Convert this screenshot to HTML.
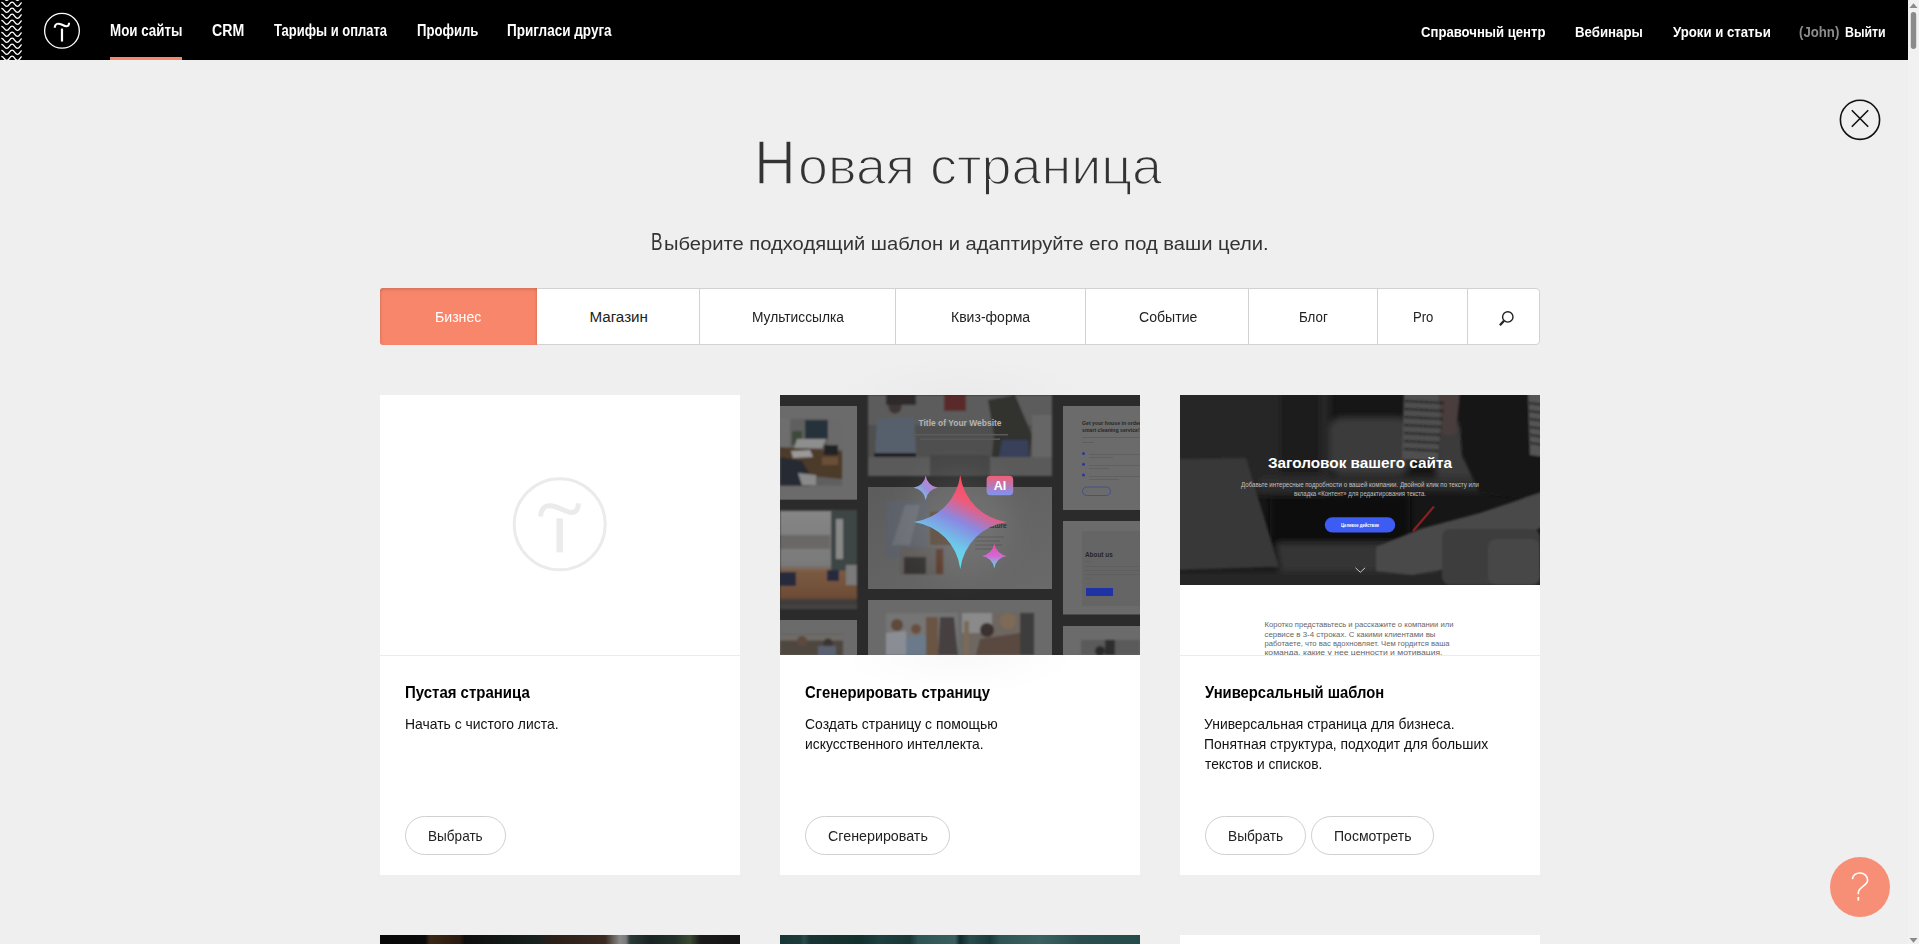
<!DOCTYPE html>
<html><head><meta charset="utf-8">
<style>
*{box-sizing:border-box;margin:0;padding:0}
html,body{width:1919px;height:944px;overflow:hidden}
body{background:#efefef;position:relative;font-family:"Liberation Sans",sans-serif;color:#000}
.abs{position:absolute}
.t{position:absolute;white-space:nowrap;line-height:1;transform-origin:0 0}
.thin3{-webkit-text-stroke:1.6px #efefef}
.thin1{-webkit-text-stroke:0.5px #efefef}
#hdr{position:absolute;left:0;top:0;width:1908px;height:60px;background:#000}
#uline{position:absolute;left:110px;top:57px;width:72px;height:3px;background:#f8876b}
#sb{position:absolute;left:1908px;top:0;width:11px;height:944px;background:#f1f1f1}
#tabs{position:absolute;left:380px;top:288px;width:1160px;height:57px;background:#fff;border:1px solid #d2d2d2;border-radius:4px}
.sep{position:absolute;top:288px;width:1px;height:57px;background:#d2d2d2}
.card{position:absolute;top:395px;width:360px;height:480px;background:#fff}
.card .img{position:absolute;left:0;top:0;width:360px;height:260px;overflow:hidden}
.card .line{position:absolute;left:0;top:260px;width:360px;height:1px;background:#ececec}
.btn{position:absolute;top:816px;height:39px;border:1px solid #d0d0d0;border-radius:20px;background:#fff}
.pn{position:absolute;background:#6b6b6b}
</style></head><body>
<div id="hdr">
<svg class="abs" style="left:0;top:0" width="24" height="60" viewBox="0 0 24 60">
<path d="M1.3,-3.6 C3.8,-3.8 4.3,0.4 6.7,0.4 C9.2,0.4 9.6,-3.8 12.1,-3.8 C14.6,-3.8 15,0.4 17.5,0.4 C19.5,0.4 20.2,-2.4 21.6,-3.6 M1.3,2.4 C3.8,2.2 4.3,6.4 6.7,6.4 C9.2,6.4 9.6,2.2 12.1,2.2 C14.6,2.2 15,6.4 17.5,6.4 C19.5,6.4 20.2,3.6 21.6,2.4 M1.3,8.4 C3.8,8.2 4.3,12.4 6.7,12.4 C9.2,12.4 9.6,8.2 12.1,8.2 C14.6,8.2 15,12.4 17.5,12.4 C19.5,12.4 20.2,9.6 21.6,8.4 M1.3,14.4 C3.8,14.2 4.3,18.4 6.7,18.4 C9.2,18.4 9.6,14.2 12.1,14.2 C14.6,14.2 15,18.4 17.5,18.4 C19.5,18.4 20.2,15.6 21.6,14.4 M1.3,20.4 C3.8,20.2 4.3,24.4 6.7,24.4 C9.2,24.4 9.6,20.2 12.1,20.2 C14.6,20.2 15,24.4 17.5,24.4 C19.5,24.4 20.2,21.6 21.6,20.4 M1.3,26.4 C3.8,26.2 4.3,30.4 6.7,30.4 C9.2,30.4 9.6,26.2 12.1,26.2 C14.6,26.2 15,30.4 17.5,30.4 C19.5,30.4 20.2,27.6 21.6,26.4 M1.3,32.4 C3.8,32.2 4.3,36.4 6.7,36.4 C9.2,36.4 9.6,32.2 12.1,32.2 C14.6,32.2 15,36.4 17.5,36.4 C19.5,36.4 20.2,33.6 21.6,32.4 M1.3,38.4 C3.8,38.2 4.3,42.4 6.7,42.4 C9.2,42.4 9.6,38.2 12.1,38.2 C14.6,38.2 15,42.4 17.5,42.4 C19.5,42.4 20.2,39.6 21.6,38.4 M1.3,44.4 C3.8,44.2 4.3,48.4 6.7,48.4 C9.2,48.4 9.6,44.2 12.1,44.2 C14.6,44.2 15,48.4 17.5,48.4 C19.5,48.4 20.2,45.6 21.6,44.4 M1.3,50.4 C3.8,50.2 4.3,54.4 6.7,54.4 C9.2,54.4 9.6,50.2 12.1,50.2 C14.6,50.2 15,54.4 17.5,54.4 C19.5,54.4 20.2,51.6 21.6,50.4 M1.3,56.4 C3.8,56.2 4.3,60.4 6.7,60.4 C9.2,60.4 9.6,56.2 12.1,56.2 C14.6,56.2 15,60.4 17.5,60.4 C19.5,60.4 20.2,57.6 21.6,56.4" fill="none" stroke="#fff" stroke-width="1.3"/>
</svg>
<svg class="abs" style="left:43.4px;top:11.7px" width="38.2" height="38.2" viewBox="0 0 100 100">
<circle cx="49.7" cy="49.3" r="45.5" fill="none" stroke="#fff" stroke-width="3.4"/>
<path d="M30.7,41.5 C31,29.5 40,28.5 50,33.5 C60,38.5 68,40.5 68.4,28.3" fill="none" stroke="#fff" stroke-width="5.4"/>
<path d="M49.7,43.4 L49.7,77.4" stroke="#fff" stroke-width="5.8"/>
</svg>
<div id="uline"></div>
</div>
<div id="sb">
<svg class="abs" style="left:0;top:0" width="11" height="944">
<path d="M1.5,8 L5.5,3.2 L9.5,8 Z" fill="#8a8a8a"/>
<rect x="2.8" y="12" width="5.4" height="37" rx="2.7" fill="#8a8a8a"/>
<path d="M1.5,938 L5.5,942.8 L9.5,938 Z" fill="#8a8a8a"/>
</svg>
</div>
<svg class="abs" style="left:1838px;top:98px" width="44" height="44" viewBox="0 0 44 44">
<circle cx="22" cy="21.8" r="19.6" fill="none" stroke="#111" stroke-width="1.6"/>
<path d="M13.8,12.3 L30.2,28.8 M30.2,12.3 L13.8,28.8" stroke="#111" stroke-width="1.6"/>
</svg>

<div id="tabs"></div>
<div class="abs" style="left:380px;top:288px;width:157px;height:57px;background:#f8866a;border-radius:3px 0 0 3px;box-shadow:inset 0 3px 3px -1px rgba(0,0,0,.12),inset 3px 0 3px -2px rgba(0,0,0,.10),inset -3px 0 3px -2px rgba(0,0,0,.10)"></div>
<div class="sep" style="left:699px"></div>
<div class="sep" style="left:895px"></div>
<div class="sep" style="left:1085px"></div>
<div class="sep" style="left:1248px"></div>
<div class="sep" style="left:1377px"></div>
<div class="sep" style="left:1467px"></div>
<svg class="abs" style="left:1496px;top:306px" width="20" height="20" viewBox="0 0 20 20">
<circle cx="11.8" cy="10.9" r="5.2" fill="none" stroke="#222" stroke-width="1.4"/>
<path d="M8,14.7 L3.9,19.2" stroke="#222" stroke-width="2.3"/>
</svg>

<div class="card" style="left:380px">
<div class="img">
<svg class="abs" style="left:130px;top:80px" width="100" height="100" viewBox="0 0 100 100">
<circle cx="49.7" cy="49.3" r="45.5" fill="none" stroke="#ebebeb" stroke-width="3"/>
<path d="M30.7,41.5 C31,29.5 40,28.5 50,33.5 C60,38.5 68,40.5 68.4,28.3" fill="none" stroke="#ebebeb" stroke-width="5"/>
<path d="M49.7,43.4 L49.7,77.4" stroke="#ebebeb" stroke-width="6.4"/>
</svg>
</div>
<div class="line"></div>
</div>

<div class="abs" style="left:830px;top:355px;width:260px;height:40px;background:radial-gradient(ellipse 50% 100% at 50% 100%,rgba(0,0,0,.02),rgba(0,0,0,0))"></div>
<div class="card" style="left:780px">
<div class="img" style="background:#2b2b2b">
<svg class="abs" style="left:0;top:0" width="360" height="260" viewBox="0 0 360 260">
<defs>
<filter id="b2" x="-10%" y="-10%" width="120%" height="120%"><feGaussianBlur stdDeviation="1.2"/></filter>
<filter id="glow" x="-50%" y="-50%" width="200%" height="200%"><feGaussianBlur stdDeviation="16"/></filter>
<linearGradient id="gBig" x1="0.72" y1="0.04" x2="0.28" y2="0.96"><stop offset="0" stop-color="#ff4454"/><stop offset="0.28" stop-color="#f05a78"/><stop offset="0.5" stop-color="#8a88e2"/><stop offset="0.75" stop-color="#6ccaea"/><stop offset="1" stop-color="#58e8ea"/></linearGradient>
<linearGradient id="gTL" x1="0.1" y1="0.9" x2="0.9" y2="0.1"><stop offset="0" stop-color="#70d0ee"/><stop offset="0.5" stop-color="#9a90dc"/><stop offset="1" stop-color="#e07ac0"/></linearGradient>
<linearGradient id="gBR" x1="0.5" y1="0" x2="0.5" y2="1"><stop offset="0" stop-color="#f44aa8"/><stop offset="0.5" stop-color="#d268d4"/><stop offset="1" stop-color="#58e6ea"/></linearGradient>
<linearGradient id="gAI" x1="0.5" y1="0" x2="0.5" y2="1"><stop offset="0" stop-color="#f25e74"/><stop offset="1" stop-color="#7e94f2"/></linearGradient>
<linearGradient id="gRoom" x1="0" y1="0" x2="0" y2="1"><stop offset="0" stop-color="#868686"/><stop offset="0.55" stop-color="#7a7a7a"/><stop offset="0.62" stop-color="#7a5a42"/><stop offset="0.88" stop-color="#6e4c36"/><stop offset="0.92" stop-color="#3a3a3c"/><stop offset="1" stop-color="#4a4644"/></linearGradient>
<linearGradient id="gPan" x1="0" y1="0" x2="1" y2="1"><stop offset="0" stop-color="#5c5c5c"/><stop offset="1" stop-color="#6a6a6a"/></linearGradient>
</defs>
<rect width="360" height="260" fill="#2b2b2b"/>
<!-- left column -->
<rect x="0" y="11" width="77" height="93.7" fill="#6b6b6b"/>
<g filter="url(#b2)">
<rect x="0" y="24" width="62" height="66.6" fill="#5e5e5e"/>
<rect x="0" y="24" width="10" height="30" fill="#6e6e6e"/>
<rect x="48" y="24" width="14" height="30" fill="#6a6a6a"/>
<rect x="12" y="36" width="10" height="14" fill="#3e4a3a"/>
<polygon points="0,52 62,56 62,84 0,78" fill="#4e3a2a"/>
<rect x="25" y="25" width="23" height="19" fill="#26303a"/>
<polygon points="17,44 46,44 42,53 14,53" fill="#8e8e8e"/>
<polygon points="11,56 30,55 33,62 13,63" fill="#9a9a9a"/>
<rect x="42" y="62" width="16" height="8" fill="#6a5038"/>
<polygon points="0,62 22,66 34,86 30,90.6 0,90.6" fill="#262a32"/>
<polygon points="18,78 36,80 36,90 22,90" fill="#8a8a8a"/>
<rect x="44" y="50" width="14" height="10" fill="#222"/>
</g>
<g filter="url(#b2)">
<rect x="0" y="115.7" width="77" height="98.3" fill="url(#gRoom)"/>
<rect x="0" y="140" width="50" height="14" fill="#6a6866"/>
<rect x="51" y="115.7" width="26" height="60" fill="#3e4444"/>
<rect x="56" y="124" width="7" height="40" fill="#888"/>
<rect x="0" y="177" width="16" height="14" fill="#262c3c"/>
<rect x="47" y="175" width="12" height="11" fill="#262c3c"/>
<rect x="66" y="170" width="11" height="20" fill="#7a7a7a"/>
</g>
<rect x="0" y="225" width="77" height="35" fill="#6b6b6b"/>
<g filter="url(#b2)">
<rect x="0" y="239.5" width="63" height="21" fill="#4e4640"/>
<rect x="0" y="239.5" width="63" height="6" fill="#6e6a66"/>
<circle cx="22" cy="246" r="5" fill="#5e4a3c"/>
<circle cx="48" cy="248" r="4.5" fill="#3a3430"/>
<rect x="38" y="251" width="18" height="10" fill="#5a6070"/>
</g>
<!-- middle column top hero -->
<g filter="url(#b2)">
<rect x="88" y="0" width="184" height="81" fill="#505050"/>
<rect x="88" y="0" width="184" height="30" fill="#5c5c5c"/>
<circle cx="115" cy="12" r="6.5" fill="#3e3630"/>
<polygon points="97,24 134,22 136,60 95,62" fill="#56606c"/>
<rect x="94" y="58" width="42" height="12" fill="#1e1e1e"/>
<rect x="106" y="0" width="30" height="10" fill="#2e2a2a"/>
<rect x="164" y="0" width="22" height="16" fill="#5a2c2c"/>
<polygon points="208,5 235,0 252,40 248,81 210,81 214,40" fill="#33302e"/>
<polygon points="222,45 248,45 250,81 215,81" fill="#38405a"/>
<rect x="252" y="20" width="20" height="61" fill="#666"/>
<rect x="88" y="62" width="184" height="19" fill="#5a5a5a"/>
<rect x="150" y="60" width="60" height="21" fill="#444"/>
</g>
<text x="180" y="31" text-anchor="middle" font-family="Liberation Sans" font-weight="bold" font-size="9.5" fill="#b4b4b4" textLength="83" lengthAdjust="spacingAndGlyphs">Title of Your Website</text>
<rect x="132" y="39" width="96" height="1.4" fill="#5c5c5c"/>
<rect x="140" y="43.5" width="80" height="1.4" fill="#5a5a5a"/>
<!-- middle panel 2 -->
<rect x="88" y="92" width="184" height="102" fill="url(#gPan)"/>
<g filter="url(#b2)">
<rect x="106" y="106" width="41.5" height="56.5" fill="#5c6068"/>
<polygon points="125,110 140,110 130,150 112,150" fill="#6a6e74"/>
<rect x="150" y="117" width="21.5" height="33" fill="#5a4a3a"/>
<rect x="120" y="152.4" width="44" height="27.3" fill="#5e5c5a"/>
<rect x="124" y="162" width="22" height="17" fill="#343232"/>
<rect x="156" y="154" width="7" height="25" fill="#5a3a2c"/>
</g>
<text x="205" y="133.3" font-family="Liberation Sans" font-weight="bold" font-size="6.5" fill="#262626">feature</text>
<g fill="#505050"><rect x="195" y="141.5" width="29" height="1"/><rect x="195" y="145.5" width="25" height="1"/><rect x="195" y="149.5" width="27" height="1"/><rect x="195" y="153.5" width="21" height="1"/></g>
<!-- middle panel 3 -->
<rect x="88" y="205" width="184" height="55" fill="#6a6a6a"/>
<g filter="url(#b2)">
<rect x="106" y="218" width="72" height="42" fill="#747474"/>
<rect x="146" y="222" width="12" height="38" fill="#6a5444"/>
<circle cx="117" cy="230" r="6" fill="#5e4a3a"/>
<polygon points="106,238 126,236 128,260 106,260" fill="#8a8e94"/>
<circle cx="136" cy="234" r="5" fill="#6a5040"/>
<polygon points="126,242 146,240 146,260 126,260" fill="#6a7a8a"/>
<polygon points="160,222 174,222 178,260 158,260" fill="#464040"/>
<rect x="182" y="218" width="72" height="42" fill="#6e6660"/>
<rect x="182" y="218" width="30" height="20" fill="#8a8a8a"/>
<rect x="184" y="226" width="5" height="34" fill="#7a6a58"/>
<circle cx="207" cy="235" r="7" fill="#3a3030"/>
<circle cx="228" cy="226" r="8" fill="#7e6a56"/>
<polygon points="200,244 254,236 254,260 196,260" fill="#5a4a40"/>
<rect x="240" y="218" width="14" height="42" fill="#3e3c3c"/>
</g>
<!-- right column -->
<rect x="283" y="11" width="77" height="104" fill="#6b6b6b"/>
<g font-family="Liberation Sans" font-weight="bold" font-size="5.2" fill="#262626">
<text x="302" y="30">Get your house in order with o</text>
<text x="302" y="36.5">smart cleaning service!</text>
</g>
<g fill="#5e5e5e"><rect x="302" y="42" width="58" height="1"/><rect x="302" y="47" width="12" height="1"/>
<rect x="309" y="59" width="51" height="0.8"/><rect x="309" y="62" width="24" height="0.8"/>
<rect x="309" y="70" width="51" height="0.8"/><rect x="309" y="73" width="20" height="0.8"/>
<rect x="309" y="81" width="51" height="0.8"/><rect x="309" y="84" width="30" height="0.8"/></g>
<g fill="#2a3898"><circle cx="303.5" cy="58.5" r="1.5"/><circle cx="303.5" cy="69.3" r="1.5"/><circle cx="303.5" cy="80.1" r="1.5"/></g>
<rect x="302.5" y="92" width="28" height="8.5" rx="4.2" fill="none" stroke="#3a4590" stroke-width="0.7"/>
<rect x="283" y="126" width="77" height="93.5" fill="#6b6b6b"/>
<rect x="302" y="136" width="58" height="75" fill="#656565"/>
<text x="305" y="162" font-family="Liberation Sans" font-weight="bold" font-size="6.4" fill="#262626">About us</text>
<rect x="305" y="166" width="7" height="0.8" fill="#4a5aa8"/>
<g fill="#5e5e5e"><rect x="305" y="171" width="55" height="0.8"/><rect x="305" y="175" width="55" height="0.8"/><rect x="305" y="179" width="55" height="0.8"/><rect x="305" y="183" width="5" height="0.8"/></g>
<rect x="306" y="193" width="27" height="8" fill="#1e34a6"/>
<rect x="283" y="231" width="77" height="29" fill="#6b6b6b"/>
<g filter="url(#b2)">
<rect x="301" y="245" width="59" height="15" fill="#5a5a5a"/>
<rect x="325" y="245" width="10" height="15" fill="#2e2e2e"/>
<circle cx="320" cy="256" r="5" fill="#2a2a2a"/>
</g>
<!-- glow -->
<circle cx="180" cy="127" r="50" fill="#ffffff" opacity="0.09" filter="url(#glow)"/>
<!-- sparkles -->
<path transform="translate(180.3,127)" d="M0,-47 A54,54 0 0 0 46.5,0 A54,54 0 0 0 0,47 A54,54 0 0 0 -46.5,0 A54,54 0 0 0 0,-47 Z" fill="url(#gBig)"/>
<path transform="translate(145.7,92.8)" d="M0,-12.2 A14.2,14.2 0 0 0 12.2,0 A14.2,14.2 0 0 0 0,12.2 A14.2,14.2 0 0 0 -12.2,0 A14.2,14.2 0 0 0 0,-12.2 Z" fill="url(#gTL)"/>
<path transform="translate(214.3,160.9)" d="M0,-12.4 A14.4,14.4 0 0 0 12.4,0 A14.4,14.4 0 0 0 0,12.4 A14.4,14.4 0 0 0 -12.4,0 A14.4,14.4 0 0 0 0,-12.4 Z" fill="url(#gBR)"/>
<rect x="206.6" y="80.8" width="26.6" height="19.4" rx="4" fill="url(#gAI)"/>
<text x="219.9" y="95.4" text-anchor="middle" font-family="Liberation Sans" font-weight="bold" font-size="12.5" fill="#fff">AI</text>
</svg>

</div>
<div class="abs" style="left:60px;top:260px;width:240px;height:40px;background:radial-gradient(ellipse 50% 100% at 50% 0,rgba(0,0,0,.025),rgba(0,0,0,0))"></div>
</div>

<div class="card" style="left:1180px">
<div class="img" style="background:#fff">
<svg class="abs" style="left:0;top:0" width="360" height="260" viewBox="0 0 360 260">
<defs>
<filter id="b3" x="-20%" y="-20%" width="140%" height="140%"><feGaussianBlur stdDeviation="3"/></filter>
<filter id="b1" x="-20%" y="-20%" width="140%" height="140%"><feGaussianBlur stdDeviation="0.8"/></filter>
<clipPath id="c3"><rect width="360" height="190"/></clipPath>
</defs>
<rect width="360" height="260" fill="#fff"/>
<g clip-path="url(#c3)">
<rect width="360" height="190" fill="#161616"/>
<g filter="url(#b3)">
<rect x="-10" y="-10" width="160" height="110" fill="#252525"/>
<rect x="100" y="-10" width="40" height="90" fill="#1e1e1e"/>
<rect x="150" y="22" width="80" height="58" rx="12" fill="#3a3a3a"/>
<rect x="255" y="28" width="70" height="58" rx="12" fill="#3a3a3a"/>
<rect x="80" y="82" width="250" height="14" fill="#2e2e2e"/>
<rect x="90" y="100" width="140" height="55" fill="#101010"/>
<polygon points="96,148 260,148 260,182 100,182" fill="#363636"/>
<rect x="-10" y="176" width="380" height="20" fill="#262626"/>
</g>
<g filter="url(#b1)">
<polygon points="-5,64 66,63 99,172 -5,175" fill="#393939"/>
<polygon points="278,-5 365,-5 365,110 345,104 300,98 282,60" fill="#141414"/>
<polygon points="224,-5 264,-5 258,66 222,64" fill="#505050"/>
<polygon points="258,-5 280,-5 276,40 262,40" fill="#4a3c3c"/>
<polygon points="348,-5 365,-5 365,62 350,60" fill="#555"/>
<polygon points="196,152 240,134 300,118 365,96 365,130 300,168 232,180 196,176" fill="#4a4a4a"/>
<rect x="262" y="134" width="98" height="56" rx="8" fill="#3c3c3c"/>
<rect x="308" y="144" width="52" height="46" rx="8" fill="#464646"/>
</g>
<g stroke="#202020" stroke-width="1.4" filter="url(#b1)">
<path d="M224,6 L264,8 M224,14 L264,16 M224,22 L263,24 M224,30 L262,32 M224,38 L261,40 M224,46 L260,48 M224,54 L259,56"/>
<path d="M348,8 L365,10 M348,16 L365,18 M349,24 L365,26 M349,32 L365,34 M350,40 L365,42 M350,48 L365,50"/>
</g>
<path d="M233,136 L254,111.5" stroke="#8a2020" stroke-width="2.2"/>
<text x="180" y="72.8" text-anchor="middle" font-family="Liberation Sans" font-weight="bold" font-size="14" fill="#fff" textLength="184" lengthAdjust="spacingAndGlyphs">Заголовок вашего сайта</text>
<text x="180" y="92" text-anchor="middle" font-family="Liberation Sans" font-size="6.3" fill="#c0c0c0" textLength="238" lengthAdjust="spacingAndGlyphs">Добавьте интересные подробности о вашей компании. Двойной клик по тексту или</text>
<text x="180" y="101.3" text-anchor="middle" font-family="Liberation Sans" font-size="6.3" fill="#c0c0c0" textLength="132" lengthAdjust="spacingAndGlyphs">вкладка «Контент» для редактирования текста.</text>
<rect x="144.8" y="122.3" width="70.4" height="15.1" rx="7.5" fill="#3c5cf4"/>
<text x="180" y="131.8" text-anchor="middle" font-family="Liberation Sans" font-weight="bold" font-size="4.6" fill="#fff" textLength="38" lengthAdjust="spacingAndGlyphs">Целевое действие</text>
<path d="M175.5,172.8 L180.3,177.3 L185.1,172.8" fill="none" stroke="#ddd" stroke-width="0.9"/>
</g>
<g font-family="Liberation Sans" font-size="7.6" fill="#666">
<text x="84.5" y="231.8" textLength="189" lengthAdjust="spacingAndGlyphs">Коротко представьтесь и расскажите о компании или</text>
<text x="84.5" y="241.5" textLength="171" lengthAdjust="spacingAndGlyphs">сервисе в 3-4 строках. С какими клиентами вы</text>
<text x="84.5" y="250.9" textLength="185" lengthAdjust="spacingAndGlyphs">работаете, что вас вдохновляет. Чем гордится ваша</text>
<text x="84.5" y="260.4" textLength="178" lengthAdjust="spacingAndGlyphs">команда, какие у нее ценности и мотивация.</text>
</g>
</svg>

</div>
<div class="line"></div>
</div>
<div class="btn" style="left:405px;width:101px"></div>
<div class="btn" style="left:805px;width:145px"></div>
<div class="btn" style="left:1205px;width:101px"></div>
<div class="btn" style="left:1311px;width:123px"></div>

<div class="abs" style="left:380px;top:935px;width:360px;height:9px;background:linear-gradient(90deg,#070707 0,#0a0a0a 45px,#3a2614 50px,#2a1a10 80px,#0e0e0e 85px,#121a18 130px,#1a2220 160px,#2a1e18 170px,#3a2a20 225px,#8a8a8a 240px,#7a7a7a 246px,#2a3a36 250px,#1a2422 270px,#22302a 295px,#3a4a30 310px,#1a1a1a 320px,#141414 360px)"></div>
<div class="abs" style="left:780px;top:935px;width:360px;height:9px;background:linear-gradient(90deg,#173636 0,#1c3a3a 20px,#2a4a4a 24px,#183434 30px,#12302e 80px,#1e4040 100px,#183634 130px,#2e5454 138px,#3a5e5e 175px,#0e2a2a 180px,#284c4c 190px,#1a3a3a 210px,#2e5454 220px,#3a6060 260px,#2a4e4e 300px,#244a4a 360px)"></div>
<div class="abs" style="left:1180px;top:935px;width:360px;height:9px;background:#fff"></div>

<div class="abs" style="left:1830px;top:857px;width:60px;height:60px;border-radius:50%;background:#f78f76"></div>
<svg class="abs" style="left:1830px;top:857px" width="60" height="60" viewBox="0 0 60 60">
<path d="M22.4,22.2 C23,17.8 26.5,16 30,16 C34.5,16 37.6,19.3 37.6,23.3 C37.6,28.8 28.3,29.5 28.3,36 L28.3,37.3" fill="none" stroke="#fff" stroke-width="1.6"/>
<path d="M28.3,40 L28.3,43.6" stroke="#fff" stroke-width="1.8"/>
</svg>

<span class="t" style="left:109.94px;top:22.80px;font-size:15.6px;font-weight:bold;color:#fff;transform:scaleX(0.8578)">Мои сайты</span>
<span class="t" style="left:212.09px;top:22.80px;font-size:15.6px;font-weight:bold;color:#fff;transform:scaleX(0.9059)">CRM</span>
<span class="t" style="left:274.30px;top:22.80px;font-size:15.6px;font-weight:bold;color:#fff;transform:scaleX(0.8309)">Тарифы и оплата</span>
<span class="t" style="left:416.86px;top:22.80px;font-size:15.6px;font-weight:bold;color:#fff;transform:scaleX(0.8417)">Профиль</span>
<span class="t" style="left:506.83px;top:22.80px;font-size:15.6px;font-weight:bold;color:#fff;transform:scaleX(0.8667)">Пригласи друга</span>
<span class="t" style="left:1420.71px;top:24.80px;font-size:14.8px;font-weight:bold;color:#fff;transform:scaleX(0.8863)">Справочный центр</span>
<span class="t" style="left:1574.91px;top:24.80px;font-size:14.8px;font-weight:bold;color:#fff;transform:scaleX(0.8946)">Вебинары</span>
<span class="t" style="left:1672.60px;top:24.80px;font-size:14.8px;font-weight:bold;color:#fff;transform:scaleX(0.8917)">Уроки и статьи</span>
<span class="t" style="left:1799.41px;top:24.80px;font-size:14.8px;font-weight:bold;color:#8c8c8c;transform:scaleX(0.8909)">(John)</span>
<span class="t" style="left:1844.67px;top:24.80px;font-size:14.8px;font-weight:bold;color:#fff;transform:scaleX(0.8340)">Выйти</span>
<span class="t thin3" style="left:754.47px;top:130.90px;font-size:62.6px;font-weight:normal;color:#333;transform:scaleX(0.9257)">Н</span>
<span class="t thin3" style="left:797.51px;top:140.90px;font-size:51.4px;font-weight:normal;color:#333;transform:scaleX(1.0474)">овая страница</span>
<span class="t" style="left:651.42px;top:230.90px;font-size:23.4px;font-weight:normal;color:#333;transform:scaleX(0.7385)">В</span>
<span class="t" style="left:664.33px;top:234.90px;font-size:18.9px;font-weight:normal;color:#333;transform:scaleX(1.0672)">ыберите подходящий шаблон и адаптируйте его под ваши цели.</span>
<span class="t" style="left:435.47px;top:308.90px;font-size:15.2px;font-weight:normal;color:#fff;transform:scaleX(0.9292)">Бизнес</span>
<span class="t" style="left:589.40px;top:308.90px;font-size:15.2px;font-weight:normal;color:#222;transform:scaleX(1.0000)">Магазин</span>
<span class="t" style="left:751.89px;top:308.90px;font-size:15.2px;font-weight:normal;color:#222;transform:scaleX(0.9059)">Мультиссылка</span>
<span class="t" style="left:951.28px;top:308.90px;font-size:15.2px;font-weight:normal;color:#222;transform:scaleX(0.9235)">Квиз-форма</span>
<span class="t" style="left:1138.67px;top:308.90px;font-size:15.2px;font-weight:normal;color:#222;transform:scaleX(0.9279)">Событие</span>
<span class="t" style="left:1298.82px;top:308.90px;font-size:15.2px;font-weight:normal;color:#222;transform:scaleX(0.8781)">Блог</span>
<span class="t" style="left:1412.94px;top:308.90px;font-size:15.2px;font-weight:normal;color:#222;transform:scaleX(0.8636)">Pro</span>
<span class="t" style="left:404.75px;top:685.30px;font-size:15.7px;font-weight:bold;color:#000;transform:scaleX(0.9546)">Пустая страница</span>
<span class="t" style="left:804.65px;top:685.30px;font-size:15.7px;font-weight:bold;color:#000;transform:scaleX(0.9474)">Сгенерировать страницу</span>
<span class="t" style="left:1205.20px;top:685.30px;font-size:15.7px;font-weight:bold;color:#000;transform:scaleX(0.9429)">Универсальный шаблон</span>
<span class="t" style="left:404.76px;top:716.90px;font-size:14.8px;font-weight:normal;color:#111;transform:scaleX(0.9410)">Начать с чистого листа.</span>
<span class="t" style="left:804.66px;top:717.20px;font-size:14.8px;font-weight:normal;color:#111;transform:scaleX(0.9424)">Создать страницу с помощью</span>
<span class="t" style="left:804.66px;top:737.20px;font-size:14.8px;font-weight:normal;color:#111;transform:scaleX(0.9360)">искусственного интеллекта.</span>
<span class="t" style="left:1204.26px;top:717.20px;font-size:14.8px;font-weight:normal;color:#111;transform:scaleX(0.9392)">Универсальная страница для бизнеса.</span>
<span class="t" style="left:1204.26px;top:737.10px;font-size:14.8px;font-weight:normal;color:#111;transform:scaleX(0.9389)">Понятная структура, подходит для больших</span>
<span class="t" style="left:1205.20px;top:757.00px;font-size:14.8px;font-weight:normal;color:#111;transform:scaleX(0.9320)">текстов и списков.</span>
<span class="t" style="left:427.99px;top:827.80px;font-size:15px;font-weight:normal;color:#222;transform:scaleX(0.9051)">Выбрать</span>
<span class="t" style="left:827.55px;top:827.80px;font-size:15px;font-weight:normal;color:#222;transform:scaleX(0.9524)">Сгенерировать</span>
<span class="t" style="left:1227.69px;top:827.80px;font-size:15px;font-weight:normal;color:#222;transform:scaleX(0.9136)">Выбрать</span>
<span class="t" style="left:1333.76px;top:827.80px;font-size:15px;font-weight:normal;color:#222;transform:scaleX(0.9370)">Посмотреть</span>
</body></html>
